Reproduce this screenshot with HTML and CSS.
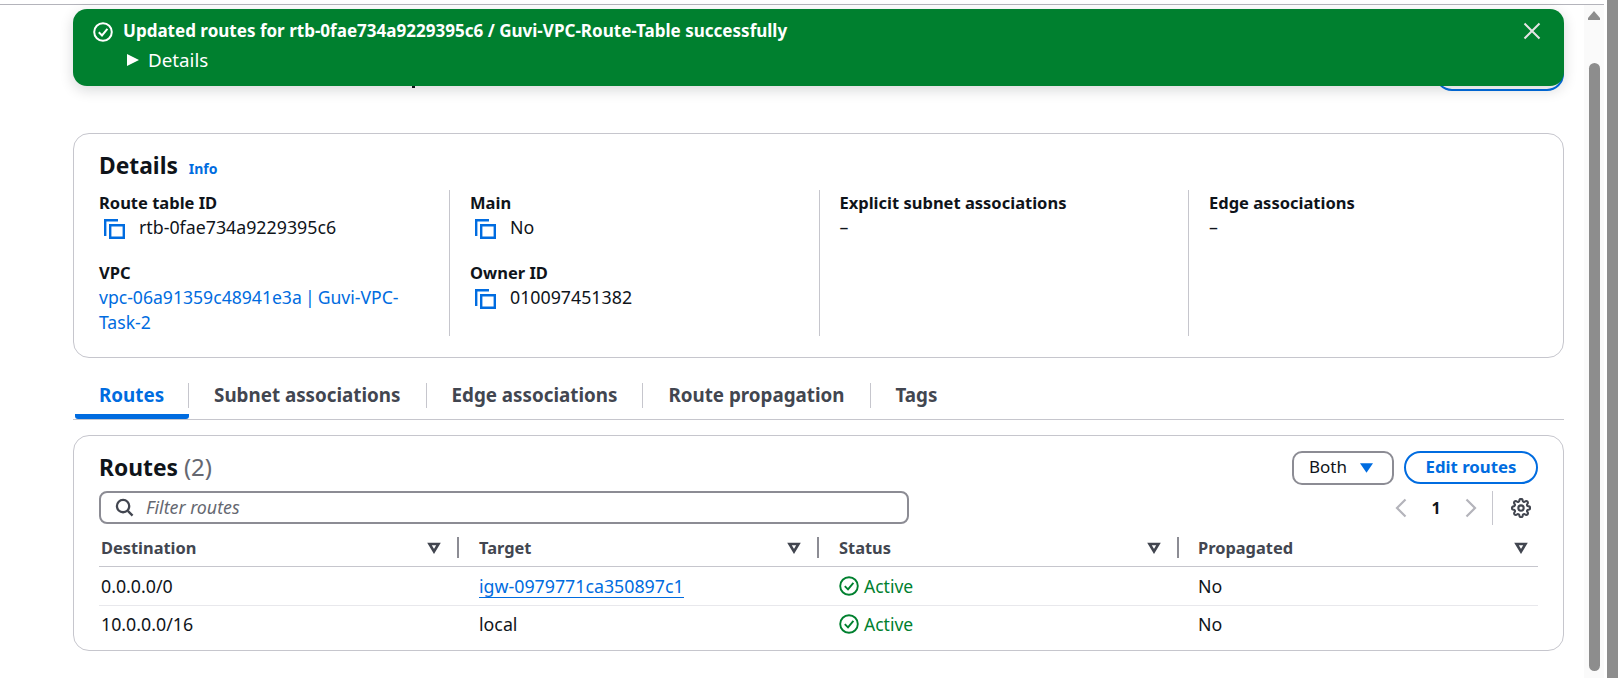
FILE: index.html
```html
<!DOCTYPE html>
<html lang="en">
<head>
    <meta charset="UTF-8">
    <title>Route table details</title>
    <link rel="stylesheet" href="styles.css">
</head>
<body>
    <div class="viewport">
        <main class="content">
            <!-- title and actions sit behind the flash, only their bottom edges show -->
            <div class="page-header">
                <span class="title-stub"></span>
                <button class="btn btn-actions" type="button" aria-label="Actions"></button>
            </div>

            <section class="card details">
                <h2>Details <a class="info" href="#">Info</a></h2>
                <div class="details-grid">
                    <div class="details-col">
                        <div class="field">
                            <div class="field-label">Route table ID</div>
                            <div class="copy-row">
                                <svg class="copy-icon" viewBox="0 0 21 20"><path d="M1.2 17V1.2H14M6.2 6.2h13.6v12.6H6.2z"/></svg>
                                <span>rtb-0fae734a9229395c6</span>
                            </div>
                        </div>
                        <div class="field">
                            <div class="field-label">VPC</div>
                            <a class="link vpc-link" href="#">vpc-06a91359c48941e3a | Guvi-VPC-Task-2</a>
                        </div>
                    </div>
                    <div class="details-col">
                        <div class="field">
                            <div class="field-label">Main</div>
                            <div class="copy-row">
                                <svg class="copy-icon" viewBox="0 0 21 20"><path d="M1.2 17V1.2H14M6.2 6.2h13.6v12.6H6.2z"/></svg>
                                <span>No</span>
                            </div>
                        </div>
                        <div class="field">
                            <div class="field-label">Owner ID</div>
                            <div class="copy-row">
                                <svg class="copy-icon" viewBox="0 0 21 20"><path d="M1.2 17V1.2H14M6.2 6.2h13.6v12.6H6.2z"/></svg>
                                <span>010097451382</span>
                            </div>
                        </div>
                    </div>
                    <div class="details-col">
                        <div class="field">
                            <div class="field-label">Explicit subnet associations</div>
                            <div>–</div>
                        </div>
                    </div>
                    <div class="details-col">
                        <div class="field">
                            <div class="field-label">Edge associations</div>
                            <div>–</div>
                        </div>
                    </div>
                </div>
            </section>

            <nav class="tabs">
                <a class="tab active" href="#"><span class="tab-label">Routes</span></a>
                <a class="tab" href="#"><span class="tab-label">Subnet associations</span></a>
                <a class="tab" href="#"><span class="tab-label">Edge associations</span></a>
                <a class="tab" href="#"><span class="tab-label">Route propagation</span></a>
                <a class="tab" href="#"><span class="tab-label last">Tags</span></a>
            </nav>

            <section class="card routes">
                <div class="routes-head">
                    <h2>Routes <span class="count">(2)</span></h2>
                    <div class="routes-actions">
                        <button class="btn-select" type="button">Both
                            <svg class="caret" viewBox="0 0 14 10"><path d="M0 0h14L7 10z"/></svg>
                        </button>
                        <button class="btn btn-edit" type="button">Edit routes</button>
                    </div>
                </div>
                <div class="routes-tools">
                    <div class="filter">
                        <svg class="search-icon" viewBox="0 0 20 20"><circle cx="8.5" cy="8.5" r="6.5"/><path d="M13.5 13.5 18.5 18.5"/></svg>
                        <span>Filter routes</span>
                    </div>
                    <div class="pager">
                        <svg class="chevron" viewBox="0 0 12 20"><path d="M10.5 1.5 2 10l8.5 8.5"/></svg>
                        <span class="page-num">1</span>
                        <svg class="chevron" viewBox="0 0 12 20"><path d="M1.5 1.5 10 10l-8.5 8.5"/></svg>
                        <span class="pager-gear">
                            <svg class="gear" viewBox="0 0 24 24"><circle cx="12" cy="12" r="3.2"/><path d="M19.4 15a1.65 1.65 0 0 0 .33 1.82l.06.06a2 2 0 0 1 0 2.83 2 2 0 0 1-2.83 0l-.06-.06a1.65 1.65 0 0 0-1.82-.33 1.65 1.65 0 0 0-1 1.51V21a2 2 0 0 1-2 2 2 2 0 0 1-2-2v-.09A1.65 1.65 0 0 0 9 19.4a1.65 1.65 0 0 0-1.82.33l-.06.06a2 2 0 0 1-2.83 0 2 2 0 0 1 0-2.83l.06-.06a1.65 1.65 0 0 0 .33-1.82 1.65 1.65 0 0 0-1.51-1H3a2 2 0 0 1-2-2 2 2 0 0 1 2-2h.09A1.65 1.65 0 0 0 4.6 9a1.65 1.65 0 0 0-.33-1.82l-.06-.06a2 2 0 0 1 0-2.83 2 2 0 0 1 2.83 0l.06.06a1.65 1.65 0 0 0 1.82.33H9a1.65 1.65 0 0 0 1-1.51V3a2 2 0 0 1 2-2 2 2 0 0 1 2 2v.09a1.65 1.65 0 0 0 1 1.51 1.65 1.65 0 0 0 1.82-.33l.06-.06a2 2 0 0 1 2.83 0 2 2 0 0 1 0 2.83l-.06.06a1.65 1.65 0 0 0-.33 1.82V9a1.65 1.65 0 0 0 1.51 1H21a2 2 0 0 1 2 2 2 2 0 0 1-2 2h-.09a1.65 1.65 0 0 0-1.51 1z"/></svg>
                        </span>
                    </div>
                </div>
                <div class="table">
                    <div class="row row-head">
                        <div class="cell">Destination<svg class="sort" viewBox="0 0 14 12"><path d="M2.5 2h9L7 9.5z"/></svg></div>
                        <div class="cell">Target<svg class="sort" viewBox="0 0 14 12"><path d="M2.5 2h9L7 9.5z"/></svg></div>
                        <div class="cell">Status<svg class="sort" viewBox="0 0 14 12"><path d="M2.5 2h9L7 9.5z"/></svg></div>
                        <div class="cell">Propagated<svg class="sort" viewBox="0 0 14 12"><path d="M2.5 2h9L7 9.5z"/></svg></div>
                    </div>
                    <div class="row">
                        <div class="cell">0.0.0.0/0</div>
                        <div class="cell"><a class="link underlined" href="#">igw-0979771ca350897c1</a></div>
                        <div class="cell status">
                            <svg class="status-icon" viewBox="0 0 20 20"><circle cx="10" cy="10" r="8.8"/><path d="M5.8 10.2 9 13.4l5.4-6.6"/></svg>Active
                        </div>
                        <div class="cell">No</div>
                    </div>
                    <div class="row">
                        <div class="cell">10.0.0.0/16</div>
                        <div class="cell">local</div>
                        <div class="cell status">
                            <svg class="status-icon" viewBox="0 0 20 20"><circle cx="10" cy="10" r="8.8"/><path d="M5.8 10.2 9 13.4l5.4-6.6"/></svg>Active
                        </div>
                        <div class="cell">No</div>
                    </div>
                </div>
            </section>

            <div class="flash">
                <svg class="flash-check" viewBox="0 0 20 20"><circle cx="10" cy="10" r="8.8"/><path d="M5.8 10.2 9 13.4l5.4-6.6"/></svg>
                <div class="flash-body">
                    <div class="flash-title">Updated routes for rtb-0fae734a9229395c6 / Guvi-VPC-Route-Table successfully</div>
                    <div class="flash-more"><svg class="flash-caret" viewBox="0 0 12 12"><path d="M0 0l12 6-12 6z"/></svg>Details</div>
                </div>
                <svg class="flash-close" viewBox="0 0 18 18"><path d="M1.5 1.5l15 15M16.5 1.5l-15 15"/></svg>
            </div>
        </main>
        <div class="track">
            <svg class="track-arrow" viewBox="0 0 12 9"><path d="M6 0l6 7v2H0V7z"/></svg>
            <div class="thumb"></div>
        </div>
    </div>
    <div class="outer-bar"></div>
</body>
</html>
```

FILE: styles.css
```css
body {
    margin: 0;
    height: 678px;
    overflow: hidden;
    display: flex;
    font-family: "Noto Sans", sans-serif;
    font-size: 17.8px;
    line-height: 25px;
    color: #0f141a;
    background-color: #fff;
}
a {
    text-decoration: none;
}
svg {
    flex: none;
}

/* window frame */
.viewport {
    width: 1604px;
    margin-top: 4px;
    border-top: 1px solid #b4b4bb;
    display: flex;
}
.content {
    position: relative;
    width: 1491px;
    padding: 0 20px 0 73px;
}
.track {
    width: 20px;
    background-color: #fafafa;
    display: flex;
    flex-direction: column;
    align-items: center;
}
.track-arrow {
    width: 12px;
    height: 9px;
    margin-top: 6px;
    fill: #8d8d8d;
}
.thumb {
    width: 11px;
    height: 608px;
    margin-top: 43px;
    border-radius: 6px;
    background-color: #8d8d8d;
}
.outer-bar {
    width: 11px;
    margin-left: 3px;
    background-color: #8d8d8d;
}

/* header behind the flash */
.page-header {
    height: 86px;
    margin-bottom: 42px;
    display: flex;
    justify-content: space-between;
    align-items: flex-end;
}
.title-stub {
    width: 3px;
    height: 2px;
    margin: 0 0 3px 339px;
    background-color: #0f141a;
}
.btn {
    font-family: inherit;
    font-size: 16.8px;
    font-weight: 700;
    color: #006ce0;
    background: #fff;
    border: 2px solid #006ce0;
    border-radius: 20px;
    cursor: pointer;
}
.btn-actions {
    width: 129px;
    height: 34px;
}

/* flash */
.flash {
    position: absolute;
    left: 73px;
    top: 4px;
    width: 1491px;
    height: 77px;
    box-sizing: border-box;
    padding: 5px 23px 0 20px;
    display: flex;
    border-radius: 14px;
    background-color: #00802f;
    color: #fff;
    box-shadow: 0 4px 14px rgba(15, 20, 26, 0.16);
}
.flash-check {
    width: 20px;
    height: 20px;
    margin-top: 8px;
    fill: none;
    stroke: #fff;
    stroke-width: 2;
}
.flash-body {
    flex: 1;
    margin-left: 10px;
}
.flash-title {
    font-size: 17.05px;
    font-weight: 700;
    line-height: 34px;
}
.flash-more {
    display: flex;
    align-items: center;
    height: 24px;
    padding-left: 4px;
    font-size: 18.8px;
}
.flash-caret {
    width: 12px;
    height: 12px;
    margin-right: 9px;
    fill: #fff;
}
.flash-close {
    width: 18px;
    height: 18px;
    margin-top: 8px;
    fill: none;
    stroke: #e4e4e4;
    stroke-width: 2;
}

/* cards */
.card {
    box-sizing: border-box;
    border: 1px solid #c6c6cd;
    border-radius: 16px;
    background-color: #fff;
}
h2 {
    margin: 0;
    font-size: 22.8px;
    line-height: 30px;
    font-weight: 700;
}
.details {
    height: 225px;
    padding: 17px 25px 0;
}
.info {
    margin-left: 5px;
    font-size: 14px;
    color: #006ce0;
}
.details-grid {
    display: grid;
    grid-template-columns: 350px 369.5px 369.5px 370px;
    margin-top: 6px;
}
.details-col {
    height: 146px;
    padding-left: 20px;
    border-left: 1px solid #c6c6cd;
}
.details-col:first-child {
    padding-left: 0;
    border-left: none;
}
.field {
    width: 310px;
    margin-bottom: 20px;
}
.field-label {
    font-size: 16.5px;
    font-weight: 700;
    line-height: 25px;
}
.copy-row {
    display: flex;
    align-items: center;
}
.copy-icon {
    width: 21px;
    height: 20px;
    margin: 2px 14px 0 5px;
    fill: none;
    stroke: #006ce0;
    stroke-width: 2.4;
}
.link {
    color: #006ce0;
}
.vpc-link {
    font-size: 17.6px;
    word-spacing: -1.5px;
}

/* tabs */
.tabs {
    display: flex;
    margin-top: 25px;
    padding-left: 2px;
    border-bottom: 1px solid #c6c6cd;
}
.tab {
    display: block;
    padding-bottom: 6px;
    border-bottom: 5px solid transparent;
    font-size: 18.8px;
    font-weight: 700;
    color: #424650;
}
.tab.active {
    color: #006ce0;
    border-bottom-color: #006ce0;
    border-radius: 0 0 3px 3px;
}
.tab-label {
    display: block;
    padding: 0 25px;
    border-right: 1px solid #c6c6cd;
}
.tab.active .tab-label {
    padding: 0 24px;
}
.tab-label.last {
    border-right: none;
}

/* routes */
.routes {
    height: 216px;
    margin-top: 15px;
    padding: 15px 25px 0;
}
.routes-head {
    display: flex;
    justify-content: space-between;
}
.routes-head h2 {
    padding-top: 1px;
}
.count {
    font-size: 24px;
    font-weight: 400;
    color: #656871;
}
.routes-actions {
    display: flex;
    gap: 10px;
}
.btn-select {
    width: 102px;
    height: 34px;
    padding: 0 0 3px 15px;
    display: flex;
    align-items: center;
    font-family: inherit;
    font-size: 17px;
    color: #0f141a;
    background: #fff;
    border: 2px solid #8c8c94;
    border-radius: 10px;
}
.caret {
    width: 13px;
    height: 10px;
    margin: 2px 0 0 13px;
    fill: #006ce0;
}
.btn-edit {
    width: 134px;
    height: 33px;
    padding-bottom: 3px;
}
.routes-tools {
    display: flex;
    justify-content: space-between;
    margin-top: 6px;
}
.filter {
    width: 810px;
    height: 33px;
    box-sizing: border-box;
    padding-left: 14px;
    display: flex;
    align-items: center;
    border: 2px solid #8c8c94;
    border-radius: 8px;
    font-style: italic;
    color: #656871;
}
.search-icon {
    width: 19px;
    height: 19px;
    margin-right: 12px;
    fill: none;
    stroke: #424650;
    stroke-width: 2.4;
}
.pager {
    display: flex;
    align-items: center;
    height: 34px;
    margin-right: 7px;
}
.chevron {
    width: 12px;
    height: 20px;
    fill: none;
    stroke: #b4b4bb;
    stroke-width: 2.2;
}
.page-num {
    width: 58px;
    text-align: center;
    font-size: 16px;
    font-weight: 700;
}
.pager-gear {
    display: flex;
    align-items: center;
    height: 34px;
    margin-left: 15px;
    padding-left: 18px;
    border-left: 1px solid #c6c6cd;
}
.gear {
    width: 20px;
    height: 20px;
    fill: none;
    stroke: #424650;
    stroke-width: 2.5;
}

/* table */
.table {
    margin-top: 12px;
}
.row {
    display: grid;
    grid-template-columns: repeat(4, 360px);
    height: 38px;
    align-items: center;
    border-bottom: 1px solid #e8e8ec;
}
.row:last-child {
    height: 36px;
    border-bottom: none;
}
.row-head {
    height: 29px;
    align-items: start;
    font-size: 16.4px;
    font-weight: 700;
    color: #424650;
    border-bottom: 1px solid #c6c6cd;
}
.cell {
    display: flex;
    align-items: center;
    padding-left: 20px;
}
.cell:first-child {
    padding-left: 2px;
}
.cell:last-child {
    padding-left: 19px;
}
.row-head .cell {
    height: 21px;
    justify-content: space-between;
    padding-right: 16px;
    border-right: 2px solid #8c8c94;
    box-sizing: border-box;
}
.row-head .cell:last-child {
    padding-right: 11px;
    border-right: none;
}
.sort {
    width: 14px;
    height: 12px;
    fill: none;
    stroke: #424650;
    stroke-width: 2.6;
}
.underlined {
    border-bottom: 1px solid #006ce0;
    line-height: 22px;
}
.status {
    font-size: 17.5px;
    color: #00802f;
}
.status-icon {
    width: 20px;
    height: 20px;
    margin-right: 5px;
    fill: none;
    stroke: #00802f;
    stroke-width: 1.9;
}
```
